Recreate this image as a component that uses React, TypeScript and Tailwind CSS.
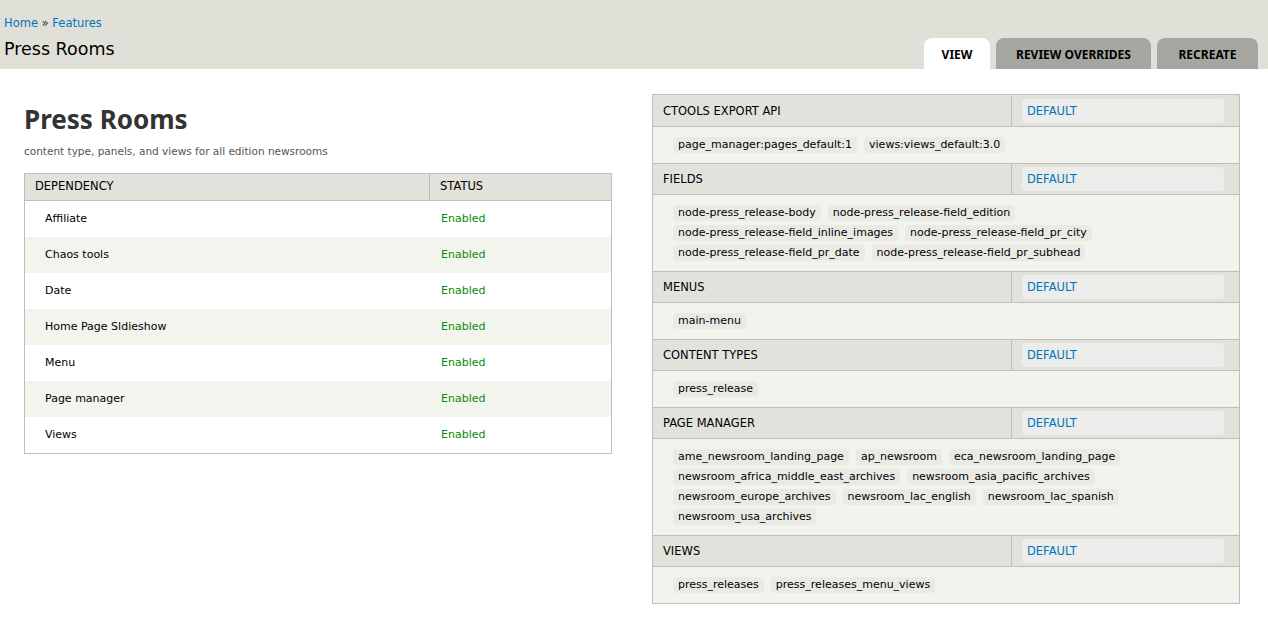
import React from "react";

const deps = [
  "Affiliate",
  "Chaos tools",
  "Date",
  "Home Page Sldieshow",
  "Menu",
  "Page manager",
  "Views",
];

const sections: { title: string; items: string[] }[] = [
  { title: "CTOOLS EXPORT API", items: ["page_manager:pages_default:1", "views:views_default:3.0"] },
  {
    title: "FIELDS",
    items: [
      "node-press_release-body",
      "node-press_release-field_edition",
      "node-press_release-field_inline_images",
      "node-press_release-field_pr_city",
      "node-press_release-field_pr_date",
      "node-press_release-field_pr_subhead",
    ],
  },
  { title: "MENUS", items: ["main-menu"] },
  { title: "CONTENT TYPES", items: ["press_release"] },
  {
    title: "PAGE MANAGER",
    items: [
      "ame_newsroom_landing_page",
      "ap_newsroom",
      "eca_newsroom_landing_page",
      "newsroom_africa_middle_east_archives",
      "newsroom_asia_pacific_archives",
      "newsroom_europe_archives",
      "newsroom_lac_english",
      "newsroom_lac_spanish",
      "newsroom_usa_archives",
    ],
  },
  { title: "VIEWS", items: ["press_releases", "press_releases_menu_views"] },
];

export default function App() {
  return (
    <div className="min-h-[628px] bg-white text-[#333] font-['DejaVu_Sans','Liberation_Sans',sans-serif]">
      {/* Header */}
      <div className="bg-[#e0e0d8] h-[69px] flex justify-between items-end">
        <div className="pl-[4px] pb-[9px]">
          <div className="text-[11.5px] leading-[14px] text-[#0074bd]">
            <span>Home</span>
            <span className="text-[#333]"> » </span>
            <span>Features</span>
          </div>
          <div className="text-[17.5px] leading-[22px] mt-[8px] text-black">Press Rooms</div>
        </div>
        <div className="flex gap-[6px] pr-[10px] font-['Noto_Sans',sans-serif]">
          <div className="h-[31px] w-[66px] bg-white rounded-t-[8px] flex items-center justify-center pt-[2px] text-[12px] font-bold text-black">
            VIEW
          </div>
          <div className="h-[31px] w-[155px] bg-[#a6a6a0] rounded-t-[8px] flex items-center justify-center pt-[2px] text-[12px] font-bold text-black">
            REVIEW OVERRIDES
          </div>
          <div className="h-[31px] w-[101px] bg-[#a6a6a0] rounded-t-[8px] flex items-center justify-center pt-[2px] text-[12px] font-bold text-black">
            RECREATE
          </div>
        </div>
      </div>

      {/* Content */}
      <div className="flex pl-[24px] gap-[40px] pt-[25px]">
        {/* Left */}
        <div className="w-[588px] pt-[10px]">
          <h1 className="text-[26px] leading-[30px] font-bold text-[#333] font-['Noto_Sans',sans-serif]">
            Press Rooms
          </h1>
          <p className="text-[10.5px] leading-[14px] text-[#555] mt-[10px]">
            content type, panels, and views for all edition newsrooms
          </p>
          <div className="mt-[15px] border border-[#bebfb9]">
            <div className="flex h-[27px] bg-[#e1e2dc] border-b border-[#bebfb9] text-[11.5px] text-black items-center">
              <div className="w-[405px] pl-[10px] h-full flex items-center border-r border-[#bebfb9]">DEPENDENCY</div>
              <div className="pl-[10px]">STATUS</div>
            </div>
            {deps.map((d, i) => (
              <div
                key={d}
                className={`flex h-[36px] items-center text-[11px] ${i % 2 === 1 ? "bg-[#f3f4ee]" : "bg-white"}`}
              >
                <div className="w-[405px] pl-[20px] text-black">{d}</div>
                <div className="pl-[11px] text-[#0b8a0b]">Enabled</div>
              </div>
            ))}
          </div>
        </div>

        {/* Right */}
        <div className="w-[588px] border border-[#bebfb9] bg-[#f3f3ee]">
          {sections.map((s, idx) => (
            <div key={s.title}>
              <div
                className={`flex h-[32px] bg-[#e1e2dc] border-b border-[#bebfb9] ${idx > 0 ? "border-t" : "pt-[1px]"}`}
              >
                <div className="w-[359px] pl-[10px] pt-[1px] flex items-center border-r border-[#bebfb9] text-[11.5px] text-black">
                  {s.title}
                </div>
                <div className="flex-1 flex items-center pl-[10px] pr-[15px]">
                  <div className="w-full h-[24px] rounded-[4px] bg-[#ececea] flex items-center pl-[5px] pt-[1px] text-[11.5px] text-[#0074bd]">
                    DEFAULT
                  </div>
                </div>
              </div>
              <div className="py-[8px] pl-[20px] pr-[20px] flex flex-wrap gap-x-[7px] leading-[20px]">
                {s.items.map((it) => (
                  <span key={it} className="inline-flex items-center h-[20px]">
                    <span className="bg-[#eaeae5] rounded-[4px] px-[5px] h-[16px] flex items-center text-[11px] text-black">
                      {it}
                    </span>
                  </span>
                ))}
              </div>
            </div>
          ))}
        </div>
      </div>
    </div>
  );
}
